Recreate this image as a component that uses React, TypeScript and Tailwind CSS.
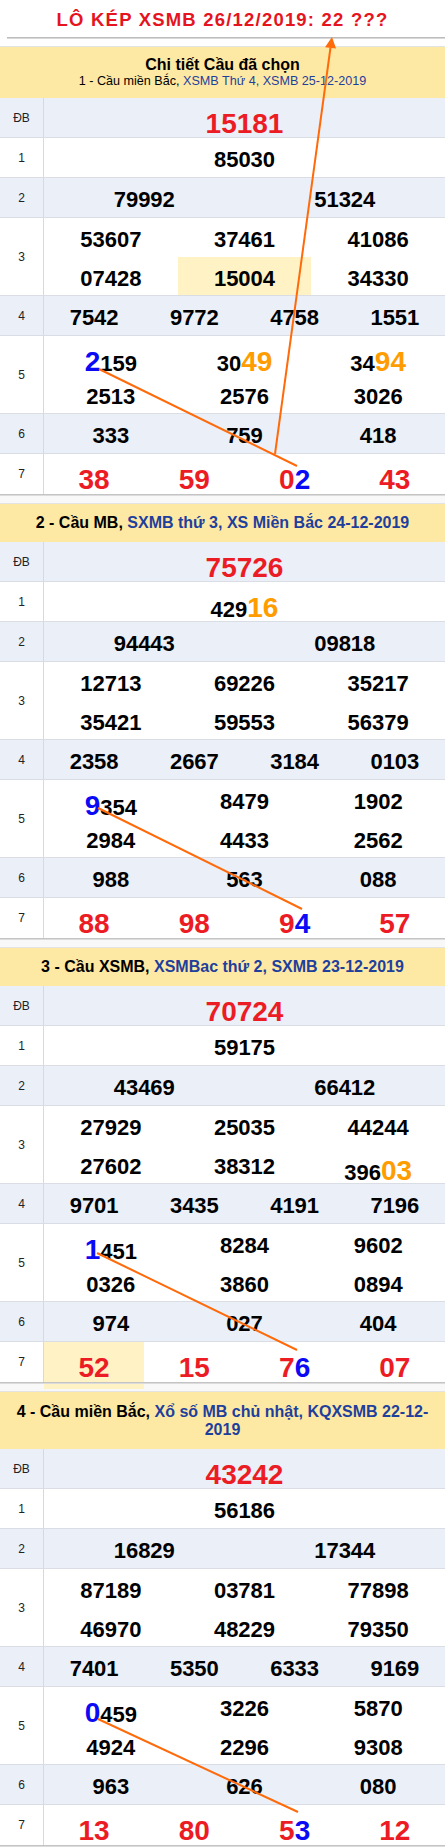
import { Fragment } from 'react'
import clsx from 'clsx'

type Block = {
  head: React.ReactNode
  headClass: string
  db: string
  g1: string
  g2: string[]
  g3: string[]
  g4: string[]
  g5: string[]
  g6: string[]
  g7: string[]
}

// {x} = blue big digit, [x] = orange big digit, trailing * = highlighted cell
const blocks: Block[] = [
  {
    headClass: 'h-[51px] pt-[9px] flex flex-col items-center',
    head: (
      <>
        <div className="text-[16px] font-bold leading-[18px] text-black">Chi tiết Cầu đã chọn</div>
        <div className="text-[12.6px] leading-[14px] text-black">
          1 - Cầu miền Bắc, <span className="text-[#1f3f9c]">XSMB Thứ 4, XSMB 25-12-2019</span>
        </div>
      </>
    ),
    db: '15181',
    g1: '85030',
    g2: ['79992', '51324'],
    g3: ['53607', '37461', '41086', '07428', '15004*', '34330'],
    g4: ['7542', '9772', '4758', '1551'],
    g5: ['{2}159', '30[49]', '34[94]', '2513', '2576', '3026'],
    g6: ['333', '759', '418'],
    g7: ['38', '59', '0{2}', '43'],
  },
  {
    headClass: 'h-[38px] flex items-center justify-center text-[16px] font-bold',
    head: (
      <div>
        2 - Cầu MB, <span className="text-[#1f3f9c]">SXMB thứ 3, XS Miền Bắc 24-12-2019</span>
      </div>
    ),
    db: '75726',
    g1: '429[16]',
    g2: ['94443', '09818'],
    g3: ['12713', '69226', '35217', '35421', '59553', '56379'],
    g4: ['2358', '2667', '3184', '0103'],
    g5: ['{9}354', '8479', '1902', '2984', '4433', '2562'],
    g6: ['988', '563', '088'],
    g7: ['88', '98', '9{4}', '57'],
  },
  {
    headClass: 'h-[38px] flex items-center justify-center text-[16px] font-bold',
    head: (
      <div>
        3 - Cầu XSMB, <span className="text-[#1f3f9c]">XSMBac thứ 2, SXMB 23-12-2019</span>
      </div>
    ),
    db: '70724',
    g1: '59175',
    g2: ['43469', '66412'],
    g3: ['27929', '25035', '44244', '27602', '38312', '396[03]'],
    g4: ['9701', '3435', '4191', '7196'],
    g5: ['{1}451', '8284', '9602', '0326', '3860', '0894'],
    g6: ['974', '027', '404'],
    g7: ['52*', '15', '7{6}', '07'],
  },
  {
    headClass: 'h-[57px] flex items-center justify-center px-[10px] text-center text-[16px] font-bold leading-[18px]',
    head: (
      <div>
        4 - Cầu miền Bắc,{' '}
        <span className="text-[#1f3f9c]">
          Xổ số MB chủ nhật, KQXSMB 22-12-
          <br />
          2019
        </span>
      </div>
    ),
    db: '43242',
    g1: '56186',
    g2: ['16829', '17344'],
    g3: ['87189', '03781', '77898', '46970', '48229', '79350'],
    g4: ['7401', '5350', '6333', '9169'],
    g5: ['{0}459', '3226', '5870', '4924', '2296', '9308'],
    g6: ['963', '626', '080'],
    g7: ['13', '80', '5{3}', '12'],
  },
]

function Num({ v, red }: { v: string; red?: boolean }) {
  const parts = v.replace('*', '').match(/\{\d+\}|\[\d+\]|\d+/g) ?? []
  return (
    <span className={clsx('font-bold', red ? 'text-[28px] text-[#ec1c24]' : 'text-[22px] text-black')}>
      {parts.map((p, i) => {
        if (p.startsWith('{'))
          return (
            <span key={i} className="text-[28px] text-[#0a0af5]">
              {p.slice(1, -1)}
            </span>
          )
        if (p.startsWith('['))
          return (
            <span key={i} className="text-[28px] text-[#ff9c00]">
              {p.slice(1, -1)}
            </span>
          )
        return <Fragment key={i}>{p}</Fragment>
      })}
    </span>
  )
}

function Cell({ v, red }: { v: string; red?: boolean }) {
  return (
    <div className={clsx('flex justify-center items-start pt-[5px]', v.endsWith('*') && 'bg-[#fff2c4]')}>
      <Num v={v} red={red} />
    </div>
  )
}

function Row({
  label,
  light,
  tall,
  last,
  cols,
  children,
}: {
  label: string
  light?: boolean
  tall?: boolean
  last?: boolean
  cols: string
  children: React.ReactNode
}) {
  return (
    <div
      className={clsx(
        'flex',
        tall ? 'h-[78px]' : 'h-[40px]',
        !last && 'border-b border-[#dadde4]',
        light ? 'bg-[#eaeff8]' : 'bg-white'
      )}
    >
      <div className="w-[44px] shrink-0 border-r border-[#d6d9e0] flex items-center justify-center text-[12px] text-[#222]">
        {label}
      </div>
      <div className={clsx('flex-1 grid', cols, tall && 'grid-rows-2')}>{children}</div>
    </div>
  )
}

function Table({ b }: { b: Block }) {
  return (
    <div className="flex flex-col">
      <div className={clsx('bg-[#fee9a4] text-black', b.headClass)}>{b.head}</div>
      <Row label="ĐB" light cols="grid-cols-1">
        <Cell v={b.db} red />
      </Row>
      <Row label="1" cols="grid-cols-1">
        <Cell v={b.g1} />
      </Row>
      <Row label="2" light cols="grid-cols-2">
        {b.g2.map((v, i) => (
          <Cell key={i} v={v} />
        ))}
      </Row>
      <Row label="3" tall cols="grid-cols-3">
        {b.g3.map((v, i) => (
          <Cell key={i} v={v} />
        ))}
      </Row>
      <Row label="4" light cols="grid-cols-4">
        {b.g4.map((v, i) => (
          <Cell key={i} v={v} />
        ))}
      </Row>
      <Row label="5" tall cols="grid-cols-3">
        {b.g5.map((v, i) => (
          <Cell key={i} v={v} />
        ))}
      </Row>
      <Row label="6" light cols="grid-cols-3">
        {b.g6.map((v, i) => (
          <Cell key={i} v={v} />
        ))}
      </Row>
      <Row label="7" last cols="grid-cols-4">
        {b.g7.map((v, i) => (
          <Cell key={i} v={v} red />
        ))}
      </Row>
      <div className="h-[1px] bg-[#c4c4c4]" />
      <div className="h-[1px] bg-[#dcdcdc]" />
    </div>
  )
}

function Lines() {
  const stroke = '#ff6a0a'
  return (
    <svg className="absolute left-0 top-0 pointer-events-none" width={445} height={1847}>
      <line x1={99} y1={369} x2={297} y2={466} stroke={stroke} strokeWidth={2} />
      <line x1={275} y1={454} x2={330.5} y2={47.5} stroke={stroke} strokeWidth={2} />
      <polygon points="332,37 336,48.6 325,47.2" fill={stroke} />
      <line x1={98} y1={808} x2={302} y2={909} stroke={stroke} strokeWidth={2} />
      <line x1={97} y1={1253} x2={297} y2={1350} stroke={stroke} strokeWidth={2} />
      <line x1={98} y1={1719} x2={298} y2={1812} stroke={stroke} strokeWidth={2} />
    </svg>
  )
}

export default function App() {
  return (
    <div className="relative w-[445px] bg-white font-['Liberation_Sans',Arial,sans-serif]">
      <div className="h-[37px] pt-[3px] flex items-center justify-center text-[18.5px] font-bold tracking-[1.2px] text-[#e5141e]">
        LÔ KÉP XSMB 26/12/2019: 22 ???
      </div>
      <div className="ml-[7px] h-[1px] bg-[#bdbdbd]" />
      <div className="ml-[7px] h-[1px] bg-[#d8d8d8]" />
      {blocks.map((b, i) => (
        <Fragment key={i}>
          <div className={clsx('h-[7px]', i === 0 ? 'bg-white' : 'bg-[#f8f8f8]')} />
          <div className="h-[1px] bg-[#e3e3e3]" />
          <Table b={b} />
        </Fragment>
      ))}
      <Lines />
    </div>
  )
}
